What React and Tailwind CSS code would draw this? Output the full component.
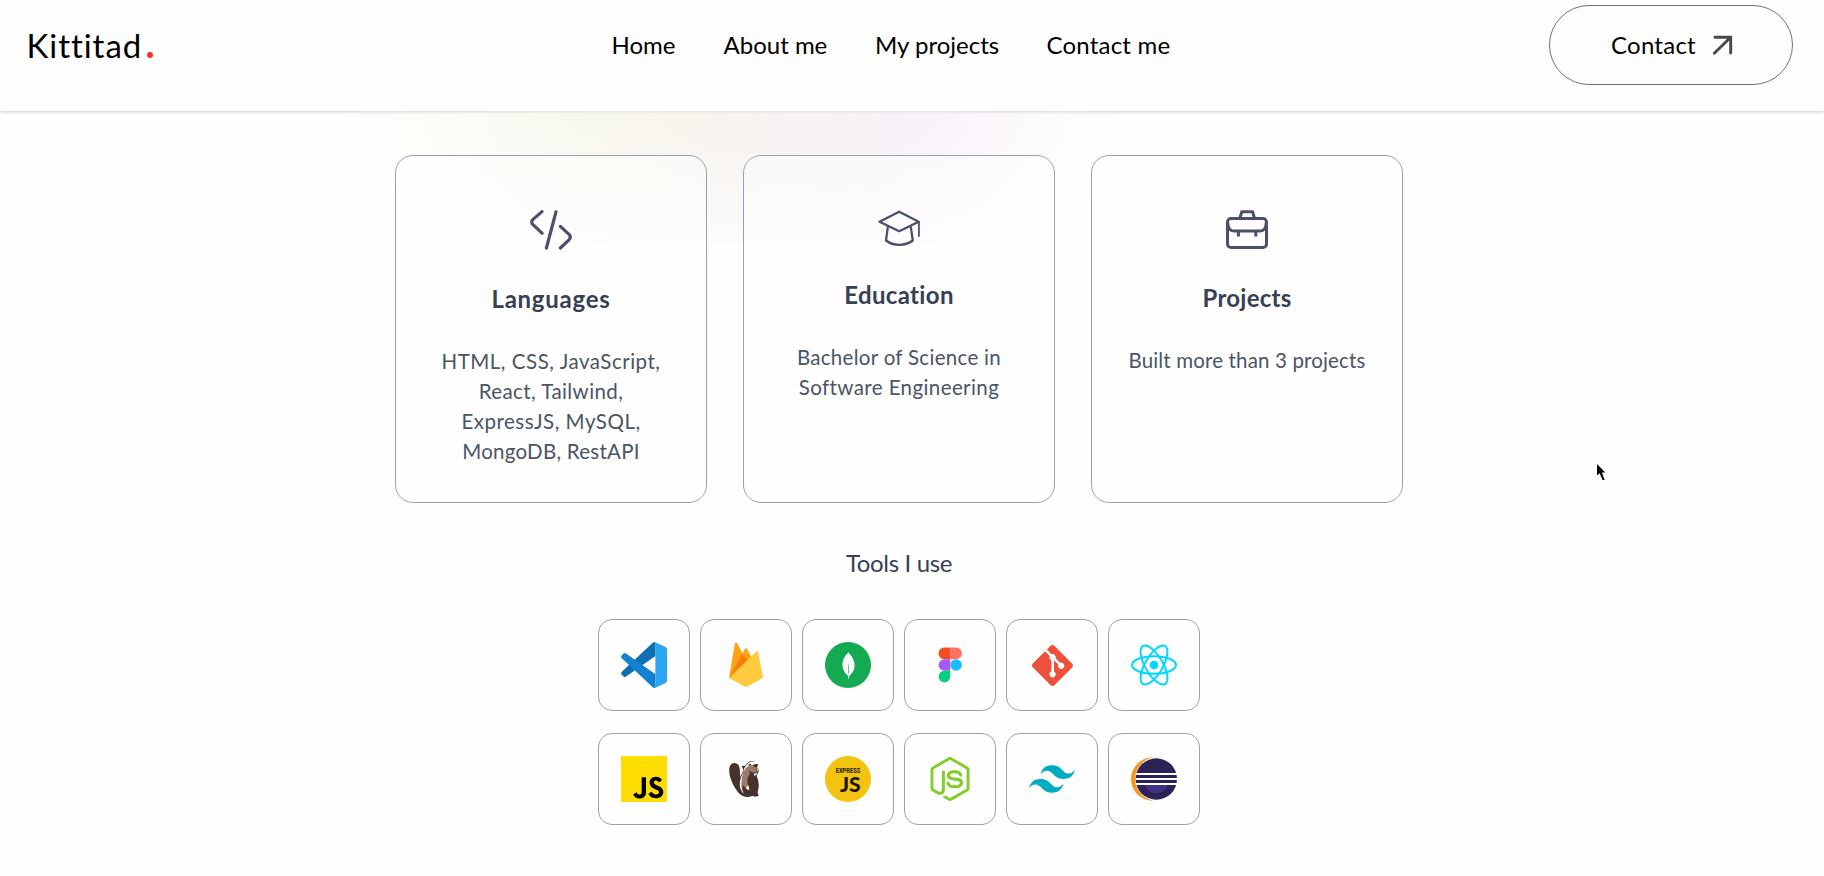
import {
  SiMongodb,
  SiGit,
  SiNodedotjs,
  SiTailwindcss,
  SiDbeaver,
  SiJavascript,
} from "react-icons/si";

const NAV = [
  { label: "Home", className: "w-[112px]" },
  { label: "About me", className: "w-[151.5px]" },
  { label: "My projects", className: "w-[171.5px]" },
  { label: "Contact me", className: "tracking-[0.2px]" },
];

function CodeIcon() {
  return (
    <svg className="h-10 w-[42px]" viewBox="530 210 42 40" fill="none" stroke="#4b4f6b" strokeWidth="3.2" strokeLinecap="round" strokeLinejoin="round">
      <path d="M542 211.600 533 219.400Q530.400 221.800 533 224.600L542 233.200" />
      <path d="M556 211.800 546.400 248" />
      <path d="M560.400 226.400 569 234.400Q571.600 237 569 239.800L560.400 248" />
    </svg>
  );
}

function CapIcon() {
  return (
    <svg className="h-9 w-[42px]" viewBox="878.5 210 42 36" fill="none" stroke="#4b4f6b" strokeWidth="2.300" strokeLinejoin="round">
      <path d="M899.700 211.700 919.200 221.700 899.700 231.300 880 221.700Z" />
      <path d="M888.400 226.400 886.500 240.500Q892 244.800 899.700 244.800 907.500 244.800 913.300 240.500L911.200 226.400" />
      <path d="M919.400 221.700V236.700" strokeWidth="1.800" />
    </svg>
  );
}

function CaseIcon() {
  return (
    <svg className="h-[39px] w-[42px]" viewBox="1226 210 42 39" fill="none" stroke="#4b4f6b" strokeWidth="3" strokeLinejoin="round">
      <rect x="1227.500" y="218.500" width="39" height="29" rx="3.600" />
      <path d="M1240 218 1241.800 211.700H1252.600L1254.400 218" />
      <path d="M1227.800 223Q1228 231 1234 231H1260Q1266 231 1266.200 223" />
      <path d="M1238.400 231V236.500M1255.800 231V236.500" />
    </svg>
  );
}

const CARDS = [
  {
    title: "Languages",
    titleClass: "tracking-[0.75px]",
    Icon: CodeIcon,
    iconClass: "h-[73px]",
    lines: [
      ["HTML, CSS, JavaScript,", "tracking-[0.52px]"],
      ["React, Tailwind,", "tracking-[0.42px]"],
      ["ExpressJS, MySQL,", "tracking-[0.5px]"],
      ["MongoDB, RestAPI", "tracking-[0.25px]"],
    ],
  },
  {
    title: "Education",
    titleClass: "tracking-[0.35px]",
    Icon: CapIcon,
    iconClass: "h-[69px]",
    lines: [
      ["Bachelor of Science in", "tracking-[0.3px]"],
      ["Software Engineering", "tracking-[0.4px]"],
    ],
  },
  {
    title: "Projects",
    titleClass: "tracking-[0.25px]",
    Icon: CaseIcon,
    iconClass: "h-[72px]",
    lines: [["Built more than 3 projects", "tracking-[0.15px]"]],
  },
];

function VsCode() {
  return (
    <svg className="size-[46px]" viewBox="0 0 46 46">
      <path d="M32 .6 34.5 0V14L5 34.6Q3.6 35.4 2.6 34.4L.6 32.4Q-.4 31 .8 29.8Z" fill="#0e70b3" />
      <path d="M32 45.4 34.5 46V32.2L5 11.4Q3.6 10.6 2.6 11.6L.6 13.6Q-.4 15 .8 16.2Z" fill="#1580cf" />
      <path d="M34.2.2 44.6 5Q46 5.8 46 7.4V38.6Q46 40.2 44.6 41L34.2 45.8Q32.8 46.3 31.8 45.2 34.4 45.6 34.4 42.6V3.4Q34.4.4 31.8.8 32.8-.3 34.2.2Z" fill="#2ba5f0" />
    </svg>
  );
}

function Firebase() {
  return (
    <svg className="size-[46px]" viewBox="0 0 46 46">
      <path d="M6 36 11.8 1.7Q12.8 0 14.3 1.3L20.5 13.2Z" fill="#ffa314" />
      <path d="M6 36 21.8 7Q22.9 5.4 24 7L29 16Z" fill="#ffa314" />
      <path d="M6 36 19.2 12 25 18Z" fill="#f57f0b" />
      <path d="M6 36 33.2 9.6Q34.8 8.6 35.2 10.4L40 35.8 25 44.3Q23 45.3 21 44.3Z" fill="#ffca3d" />
    </svg>
  );
}

function Mongo() {
  return (
    <span className="flex size-[46px] items-center justify-center rounded-full bg-[#13aa52]">
      <SiMongodb className="size-[27px] text-white" />
    </span>
  );
}

function Figma() {
  return (
    <svg className="size-[46px]" viewBox="0 0 46 46">
      <path d="M23.2 5.6H17.3a5.8 5.8 0 0 0 0 11.6H23.2Z" fill="#f24e1e" />
      <path d="M23.2 5.6H29.1a5.8 5.8 0 0 1 0 11.6H23.2Z" fill="#ff7262" />
      <path d="M23.2 17.2H17.3a5.8 5.8 0 0 0 0 11.6H23.2Z" fill="#a259ff" />
      <circle cx="29.1" cy="23" r="5.8" fill="#1abcfe" />
      <path d="M23.2 28.8H17.3a5.8 5.8 0 1 0 5.9 5.8Z" fill="#0acf83" />
    </svg>
  );
}

function ReactLogo() {
  return (
    <svg className="size-[46px]" viewBox="-23 -23 46 46" fill="none" stroke="#00d8ff" strokeWidth="2">
      <circle r="4.3" fill="#00d8ff" stroke="none" />
      <ellipse rx="22" ry="8.8" />
      <ellipse rx="22" ry="8.8" transform="rotate(60)" />
      <ellipse rx="22" ry="8.8" transform="rotate(120)" />
    </svg>
  );
}

function JsLogo() {
  return (
    <span className="flex size-[46px] bg-[linear-gradient(#000,#000)] bg-[length:36px_30px] bg-[position:8px_15px] bg-no-repeat">
      <SiJavascript className="size-[46px] text-[#ffdd00]" />
    </span>
  );
}

function Beaver() {
  return (
    <svg className="size-[46px]" viewBox="0 0 46 46">
      <path d="M19 22Q20 13 26 9.500L33 8.500 35 13 31 18 27 20Q27 31 19 35Q17.500 28 19 22Z" fill="#9d7b66" />
      <SiDbeaver x="3" y="5" size="36" color="#46332e" />
    </svg>
  );
}

function Express() {
  return (
    <svg className="size-[46px]" viewBox="0 0 46 46" fill="#1c1704">
      <circle cx="23" cy="23" r="23" fill="#f3c40f" />
      <text x="10.700" y="17" textLength="24.600" lengthAdjust="spacingAndGlyphs" className="font-['Roboto',sans-serif] text-[7.4px] font-bold">EXPRESS</text>
      <text x="15" y="35.500" textLength="20.700" lengthAdjust="spacingAndGlyphs" className="font-['Lato',sans-serif] text-[20px] font-black">JS</text>
    </svg>
  );
}

function Eclipse() {
  return (
    <svg className="size-[46px]" viewBox="0 0 46 46">
      <path d="M21.700 1.300A21.700 21.700 0 0 0 21.700 44.700Z" fill="#f7941e" />
      <circle cx="26.200" cy="23" r="22" fill="#fefefe" />
      <circle cx="25.300" cy="23" r="20.700" fill="#2c2255" />
      <path d="M13.500 29H37A12.500 12.500 0 0 1 13.500 29Z" fill="#413382" />
      <path d="M4.800 18H46.200M4.800 23H46.200M4.800 28H46.200" stroke="#fff" strokeWidth="2.200" />
    </svg>
  );
}

const TOOLS = [
  ["Visual Studio Code", <VsCode />],
  ["Firebase", <Firebase />],
  ["MongoDB", <Mongo />],
  ["Figma", <Figma />],
  ["Git", <SiGit className="size-[41px] text-[#ee513b]" />],
  ["React", <ReactLogo />],
  ["JavaScript", <JsLogo />],
  ["DBeaver", <Beaver />],
  ["Express", <Express />],
  ["Node.js", <SiNodedotjs className="size-11 text-[#83cd29]" />],
  ["Tailwind CSS", <SiTailwindcss className="size-[46px] text-[#00acc1]" />],
  ["Eclipse", <Eclipse />],
];

function Header() {
  return (
    <header className="h-[111px] bg-[#fefefe] pt-[5px] shadow-[0_1px_3px_rgba(0,0,0,0.2)]">
      <div className="flex h-20 items-center pr-[31px] pl-[26.5px] text-black">
        <a className="flex w-[585px] items-center text-[33px] leading-[48px]">
          <span className="tracking-[0.95px] [font-variant-ligatures:none]">Kittitad</span>
          <span className="mt-5 ml-[5px] size-[6px] rounded-full bg-[#ff2e2e]" />
        </a>
        <nav className="flex flex-1 text-2xl leading-9">
          {NAV.map((n) => (
            <a key={n.label} className={n.className}>{n.label}</a>
          ))}
        </nav>
        <a className="flex h-20 w-[244px] items-center rounded-full border border-[#6b7089] pl-[61px] text-2xl leading-9">
          <span className="tracking-[0.25px]">Contact</span>
          <svg className="ml-[17.5px] size-5" viewBox="0 0 20 20" fill="none" stroke="#484848" strokeWidth="2.900">
            <path d="M2 2.300H17.700V18M17 3 1.300 18.300" strokeLinecap="round" strokeLinejoin="miter" />
          </svg>
        </a>
      </div>
    </header>
  );
}

export default function App() {
  return (
    <div className="relative h-[876px] overflow-hidden bg-[#fefefe] font-['Lato',sans-serif]">
      <Header />
      <main className="flex flex-col items-center bg-[radial-gradient(ellipse_290px_160px_at_610px_-10px,rgba(246,248,224,0.45),transparent),radial-gradient(ellipse_320px_190px_at_740px_-10px,rgba(240,226,232,0.45),transparent),radial-gradient(ellipse_220px_180px_at_910px_-10px,rgba(247,236,252,0.45),transparent)] bg-[length:100%_132px] bg-no-repeat pt-11 pr-[26px]">
        <section className="flex gap-9">
          {CARDS.map(({ title, titleClass, Icon, iconClass, lines }) => (
            <article key={title} className="flex h-[348px] w-[312px] flex-col items-center rounded-[18px] border border-gray-400 bg-[#fefefe]/40 pt-[54px]">
              <div className={iconClass}>
                <Icon />
              </div>
              <h3 className={`-mt-[2px] text-2xl leading-9 font-bold text-gray-700 ${titleClass}`}>{title}</h3>
              <p className="mt-[29px] flex flex-col items-center text-[20.5px] leading-[30px] text-gray-600">
                {lines.map(([text, cls]) => (
                  <span key={text} className={cls}>{text}</span>
                ))}
              </p>
            </article>
          ))}
        </section>
        <h4 className="mt-[42px] text-2xl leading-9 tracking-[-0.35px] text-gray-700">Tools I use</h4>
        <ul className="mt-[38px] grid grid-cols-6 gap-x-2.5 gap-y-[22px]">
          {TOOLS.map(([name, icon]) => (
            <li key={name} className="flex size-[92px] items-center justify-center rounded-[14px] border border-gray-400">{icon}</li>
          ))}
        </ul>
      </main>
      <svg className="absolute top-[463px] left-[1596px] h-[18px] w-[11px]" viewBox="0 0 11 18">
        <path d="M1 1V12.500L3.600 10.200 6.600 17H8.600L5.900 9.600H9.300Z" fill="#000" />
      </svg>
    </div>
  );
}
